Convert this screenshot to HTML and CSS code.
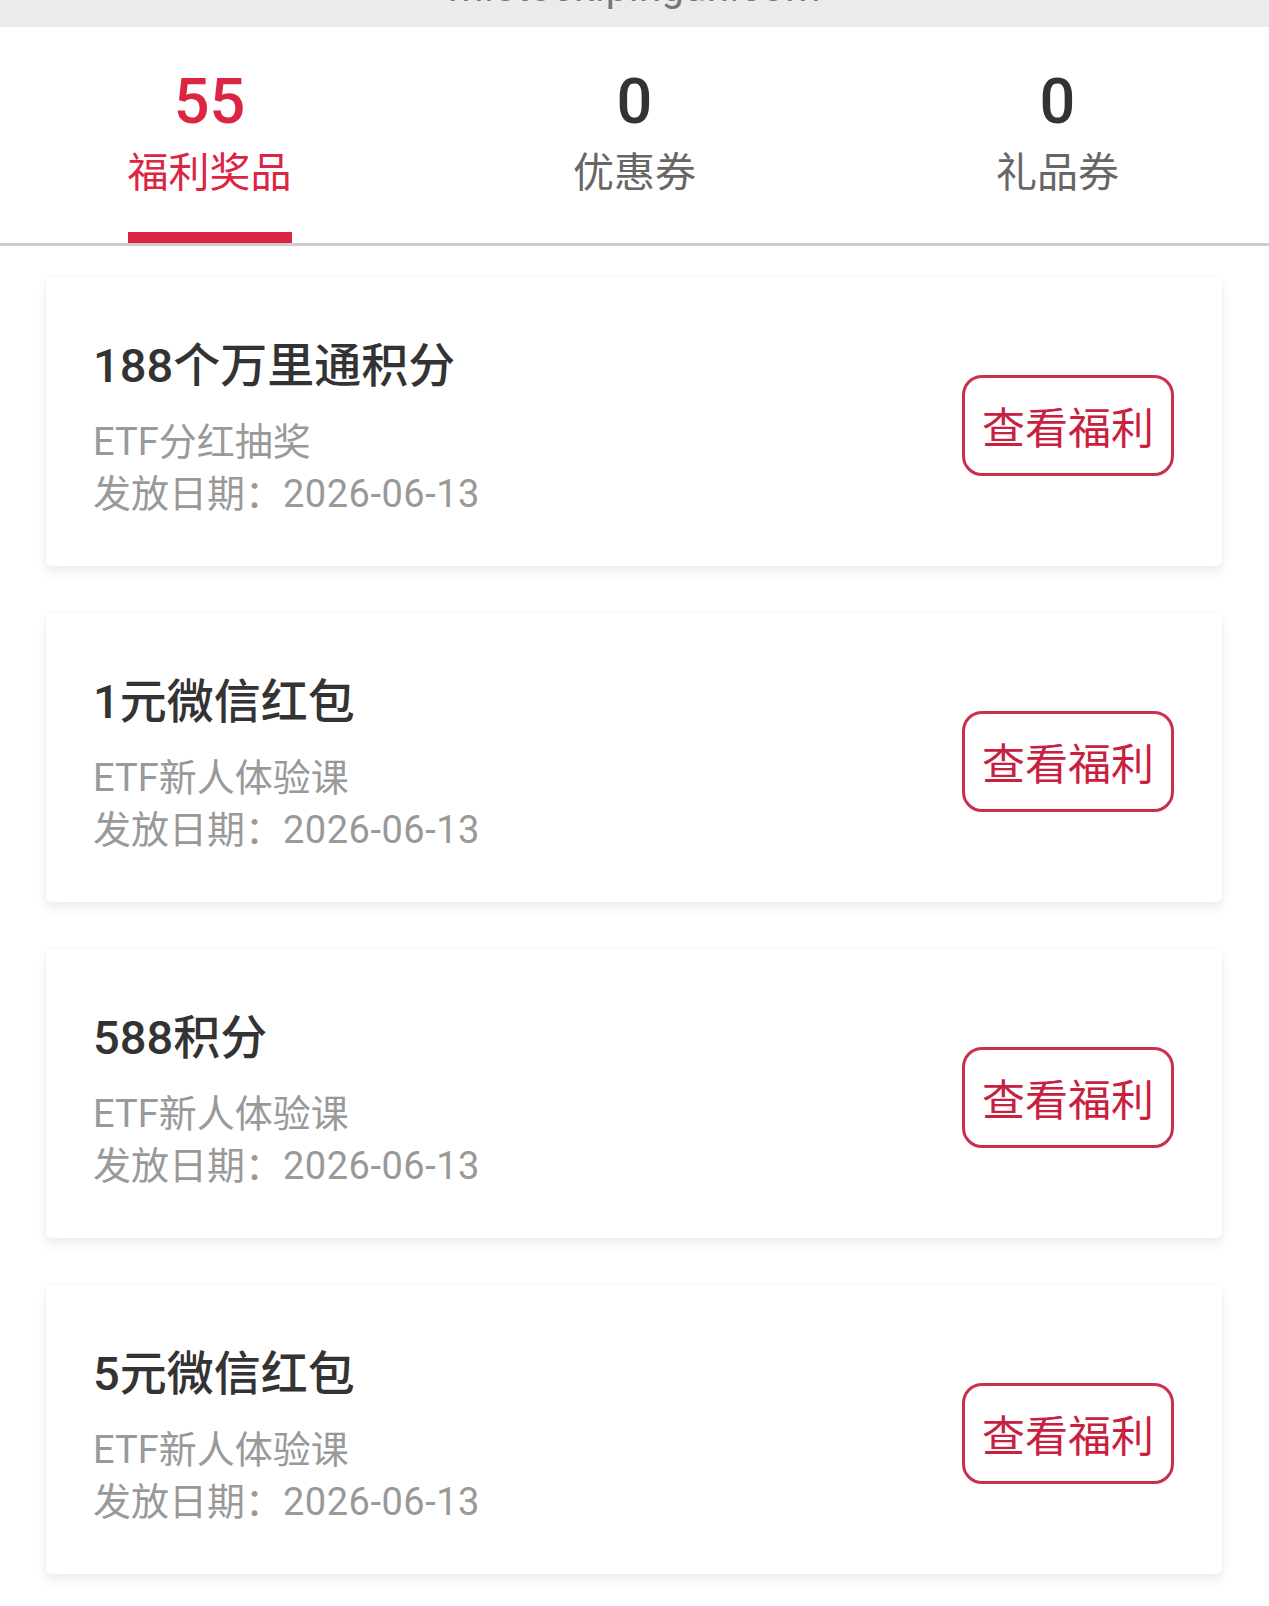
FILE: index.html
```html
<!DOCTYPE html>
<html lang="zh-CN">
<head>
    <meta charset="UTF-8">
    <meta name="viewport" content="width=device-width, initial-scale=1.0">
    <title>我的福利</title>
    <link rel="stylesheet" href="styles.css">
</head>
<body>
    <div class="urlbar"><span>m.stock.pingan.com</span></div>

    <div class="tabs">
        <div class="tab on">
            <p class="num">55</p>
            <p class="name">福利奖品</p>
            <i class="bar"></i>
        </div>
        <div class="tab">
            <p class="num">0</p>
            <p class="name">优惠券</p>
            <i class="bar"></i>
        </div>
        <div class="tab">
            <p class="num">0</p>
            <p class="name">礼品券</p>
            <i class="bar"></i>
        </div>
    </div>

    <ul class="list">
        <li class="card">
            <div class="info">
                <p class="title">188个万里通积分</p>
                <p class="sub">ETF分红抽奖</p>
                <p class="sub">发放日期：<span class="date">2026-06-13</span></p>
            </div>
            <button type="button" class="btn">查看福利</button>
        </li>
        <li class="card">
            <div class="info">
                <p class="title">1元微信红包</p>
                <p class="sub">ETF新人体验课</p>
                <p class="sub">发放日期：<span class="date">2026-06-13</span></p>
            </div>
            <button type="button" class="btn">查看福利</button>
        </li>
        <li class="card">
            <div class="info">
                <p class="title">588积分</p>
                <p class="sub">ETF新人体验课</p>
                <p class="sub">发放日期：<span class="date">2026-06-13</span></p>
            </div>
            <button type="button" class="btn">查看福利</button>
        </li>
        <li class="card">
            <div class="info">
                <p class="title">5元微信红包</p>
                <p class="sub">ETF新人体验课</p>
                <p class="sub">发放日期：<span class="date">2026-06-13</span></p>
            </div>
            <button type="button" class="btn">查看福利</button>
        </li>
    </ul>
</body>
</html>
```

FILE: styles.css
```css
* {margin: 0; padding: 0; box-sizing: border-box;}
body {background: #fff; font-family: Roboto, "Noto Sans CJK SC", sans-serif; color: #333;}
p {margin: 0;}

.urlbar {height: 27px; background: #ebebeb; overflow: hidden; text-align: center;}
.urlbar span {display: block; margin-top: -32px; font-size: 40px; line-height: 40px; color: #777; letter-spacing: 0.5px;}

.tabs {display: grid; grid-template-columns: 1fr 1fr 1fr; border-bottom: 3px solid #cdcdcd;}
.tab {display: flex; flex-direction: column; align-items: center; padding-top: 42px;}
.tab:first-child {padding-right: 4px;}
.tab .num {font-size: 63px; line-height: 66px; font-weight: 500; color: #333;}
.tab .name {margin-top: 10px; font-family: "Noto Sans CJK SC", sans-serif; font-size: 41px; line-height: 48px; color: #666;}
.tab .bar {display: block; width: 164px; height: 11px; margin-top: 39px;}
.tab.on .num, .tab.on .name {color: #dc2443;}
.tab.on .bar {background: #dc2443;}

.list {list-style: none; padding: 31px 47px 40px 46px; display: flex; flex-direction: column; gap: 47px;}
.card {display: flex; align-items: center; justify-content: space-between; padding: 61px 48px 46px 47px; background: #fff; border-radius: 5px; box-shadow: 0 6px 12px rgba(0,0,0,0.07), 0 0 5px rgba(0,0,0,0.04);}
.card .title {font-size: 47px; line-height: 56px; font-weight: 500; color: #333;}
.card .sub {font-size: 38px; line-height: 52px; color: #999;}
.card .title + .sub {margin-top: 22px;}
.card .date {letter-spacing: 0.5px;}

.btn {margin-top: -8px; padding: 25px 17px; border: 3px solid #c9304a; border-radius: 20px; background: #fff; font-family: "Noto Sans CJK SC", sans-serif; font-size: 43px; line-height: 45px; color: #c8213f;}
```
